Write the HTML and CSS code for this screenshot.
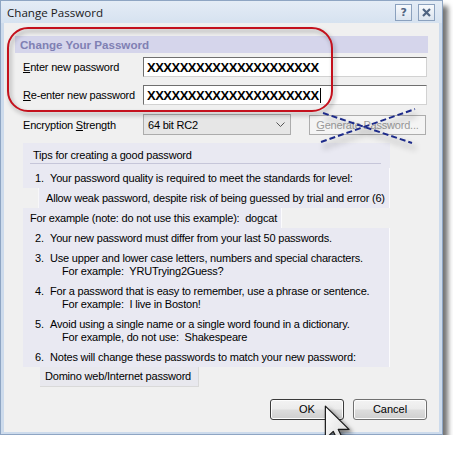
FILE: index.html
```html
<!DOCTYPE html>
<html lang="en">
<head>
    <meta charset="UTF-8">
    <title>Change Password</title>
    <link rel="stylesheet" href="styles.css">
</head>
<body>
    <div class="window">
        <div class="titlebar">
            <span class="title">Change Password</span>
            <div class="caption-btns">
                <span class="cap-btn help">?</span>
                <span class="cap-btn">
                    <svg width="9" height="9" viewBox="0 0 9 9"><path d="M1 1 L8 8 M8 1 L1 8" stroke="#4f6482" stroke-width="2.2" fill="none"/></svg>
                </span>
            </div>
        </div>

        <div class="client">
            <div class="section-band">Change Your Password</div>

            <div class="field-row first">
                <span class="field-label"><u>E</u>nter new password</span>
                <div class="text-input">XXXXXXXXXXXXXXXXXXXXX</div>
            </div>
            <div class="field-row">
                <span class="field-label"><u>R</u>e-enter new password</span>
                <div class="text-input">XXXXXXXXXXXXXXXXXXXXX<span class="caret"></span></div>
            </div>
            <div class="field-row enc">
                <span class="field-label">Encryption <u>S</u>trength</span>
                <div class="select">
                    <span>64 bit RC2</span>
                    <svg width="9" height="6" viewBox="0 0 9 6"><path d="M0.5 0.5 L4.5 4.5 L8.5 0.5" stroke="#555" fill="none"/></svg>
                </div>
                <div class="gen-btn"><u>G</u>enerate Password...</div>
            </div>

            <div class="tips">
                <div class="tips-head">
                    <div class="tips-title">Tips for creating a good password</div>
                </div>
                <div class="tip">
                    <span class="num">1.</span>
                    <div>Your password quality is required to meet the standards for level:</div>
                </div>
                <div class="tip-level">Allow weak password, despite risk of being guessed by trial and error (6)</div>
                <div class="tip-example">For example (note: do not use this example):&nbsp; dogcat</div>
                <div class="tip">
                    <span class="num">2.</span>
                    <div>Your new password must differ from your last 50 passwords.</div>
                </div>
                <div class="tip">
                    <span class="num">3.</span>
                    <div>Use upper and lower case letters, numbers and special characters.
                        <div class="eg">For example:&nbsp; YRUTrying2Guess?</div>
                    </div>
                </div>
                <div class="tip">
                    <span class="num">4.</span>
                    <div>For a password that is easy to remember, use a phrase or sentence.
                        <div class="eg">For example:&nbsp; I live in Boston!</div>
                    </div>
                </div>
                <div class="tip">
                    <span class="num">5.</span>
                    <div>Avoid using a single name or a single word found in a dictionary.
                        <div class="eg">For example, do not use:&nbsp; Shakespeare</div>
                    </div>
                </div>
                <div class="tip">
                    <span class="num">6.</span>
                    <div>Notes will change these passwords to match your new password:</div>
                </div>
            </div>
            <div class="domino">Domino web/Internet password</div>

            <div class="buttons">
                <div class="btn default">OK</div>
                <div class="btn">Cancel</div>
            </div>
        </div>

        <!-- annotations drawn over the dialog -->
        <svg class="ring" width="330" height="90" viewBox="0 0 330 90">
            <rect x="1" y="1" width="324" height="83" rx="20" ry="20" fill="none" stroke="#c4111d" stroke-width="2"/>
        </svg>
        <svg class="cross" width="104" height="44" viewBox="0 0 104 44">
            <path d="M5 38 L99 5 M7 9 L96 39" stroke="#1d2b8a" stroke-width="2" stroke-dasharray="6 3" fill="none"/>
        </svg>
        <svg class="cursor" width="31" height="46" viewBox="-1 -1 14 21">
            <defs>
                <linearGradient id="cg" x1="0" y1="0" x2="1" y2="1">
                    <stop offset="0" stop-color="#ffffff"/>
                    <stop offset="1" stop-color="#d8d8d8"/>
                </linearGradient>
            </defs>
            <path d="M0 0 L0 15 L3.6 11.5 L6.6 17.6 L8.8 16.6 L5.9 10.6 L10.8 10.6 Z" fill="url(#cg)" stroke="#1a1a1a" stroke-width="0.55" stroke-linejoin="round"/>
        </svg>
    </div>
</body>
</html>
```

FILE: styles.css
```css
body {
    margin: 0;
    background: #fff;
    font-family: "Liberation Sans", Arial, sans-serif;
    font-size: 11px;
    letter-spacing: -0.2px;
    color: #000;
}
.window {
    position: relative;
    width: 443px;
    height: 435px;
    box-sizing: border-box;
    border: 1px solid #8ea5c3;
    padding: 0 3px 3px;
    background: #cddbec;
    box-shadow: 5px 6px 5px rgba(0,0,0,0.55);
    display: flex;
    flex-direction: column;
}
.titlebar {
    flex: none;
    height: 22px;
    display: flex;
    align-items: center;
    justify-content: space-between;
    margin: 0 -3px;
    padding-left: 6px;
    padding-right: 7px;
    background: linear-gradient(#e4ecf6, #d6e2f0);
}
.title {
    font-family: "Open Sans", sans-serif;
    font-size: 11.6px;
    letter-spacing: 0;
    color: #1a1a1a;
}
.caption-btns {
    display: flex;
    gap: 6px;
}
.cap-btn {
    width: 15px;
    height: 15px;
    border: 1px solid #8ba1be;
    background: linear-gradient(#f7f9fc, #dbe4ef);
    display: flex;
    align-items: center;
    justify-content: center;
    font-family: "DejaVu Sans", sans-serif;
    font-weight: bold;
    font-size: 11px;
    color: #4f6482;
}
.client {
    flex: 1;
    background: #f0f0f0;
    padding: 13px 12px 12px 19px;
}
.section-band {
    margin: 0 -1px 0 -8px;
    height: 17px;
    line-height: 17px;
    padding-left: 5px;
    background: #d5d5eb;
    color: #8080b3;
    font-weight: bold;
    font-size: 11.6px;
    letter-spacing: 0;
}
.field-row {
    display: flex;
    align-items: center;
    height: 20px;
    margin-top: 8px;
}
.field-row.first {
    margin-top: 4px;
}
.field-row.enc {
    height: 21px;
    margin-top: 9px;
}
.field-label {
    width: 120px;
    flex: none;
}
.text-input {
    flex: 1;
    height: 20px;
    box-sizing: border-box;
    background: #fff;
    border: 1px solid #d2d2d2;
    border-top-color: #6f6f6f;
    border-left-color: #6f6f6f;
    padding-left: 3px;
    display: flex;
    align-items: center;
    font-weight: bold;
    font-size: 13px;
    letter-spacing: -0.5px;
}
.caret {
    width: 1px;
    height: 15px;
    background: #000;
    margin-left: 1px;
}
.select {
    width: 148px;
    height: 21px;
    box-sizing: border-box;
    border: 1px solid #acacac;
    background: #e6e6e6;
    display: flex;
    align-items: center;
    justify-content: space-between;
    padding: 0 5px 0 4px;
}
.gen-btn {
    margin-left: 18px;
    width: 117px;
    height: 20px;
    box-sizing: border-box;
    border: 1px solid #adadad;
    background: #f4f4f4;
    color: #9a9a9a;
    text-align: center;
    line-height: 18px;
}
.tips {
    margin-top: 8px;
    width: 367px;
    line-height: 13px;
}
.tips-head {
    background: #e9e9f2;
    padding: 0 9px 4px 7px;
}
.tips-title {
    padding: 5.5px 0 1.5px 3px;
    border-bottom: 1px solid #c6c6d9;
}
.tip {
    display: flex;
    padding: 3.5px 0;
    background: #e9e9f2;
    border-right: 1px solid #fbfbfd;
}
.num {
    width: 15px;
    padding-left: 12px;
    flex: none;
}
.eg {
    padding-left: 12px;
}
.tip-level {
    margin-left: 15px;
    padding: 3.5px 0 3.5px 7px;
    background: #e9e9f2;
    border-left: 1px solid #f7f7f9;
    border-right: 1px solid #fbfbfd;
}
.tip-example {
    width: 251px;
    padding: 3.5px 0 3.5px 7px;
    background: #e9e9f2;
    border-right: 1px solid #fbfbfd;
}
.domino {
    margin-left: 17px;
    width: 153px;
    height: 19px;
    line-height: 19px;
    padding-left: 5px;
    background: #e8e8ee;
    border-right: 1px solid #d9d9d9;
    border-bottom: 1px solid #d9d9d9;
}
.buttons {
    display: flex;
    justify-content: flex-end;
    gap: 9px;
    margin-top: 12px;
}
.btn {
    width: 74px;
    height: 21px;
    box-sizing: border-box;
    border: 1px solid #707070;
    border-radius: 3px;
    background: linear-gradient(#f3f3f3 0%, #ebebeb 48%, #dddddd 52%, #cfcfcf 100%);
    box-shadow: inset 0 0 0 1px #fcfcfc;
    text-align: center;
    line-height: 19px;
    font-size: 11px;
    letter-spacing: 0;
}
.btn.default {
    border-color: #3a3a3a;
}
.ring {
    position: absolute;
    left: 6px;
    top: 26px;
    filter: drop-shadow(2px 3px 2px rgba(0,0,0,0.35));
}
.cross {
    position: absolute;
    left: 315px;
    top: 103px;
    filter: drop-shadow(3px 5px 3px rgba(0,0,0,0.45));
}
.cursor {
    position: absolute;
    left: 322px;
    top: 403px;
    filter: drop-shadow(3px 3px 2px rgba(0,0,0,0.5));
}
```
